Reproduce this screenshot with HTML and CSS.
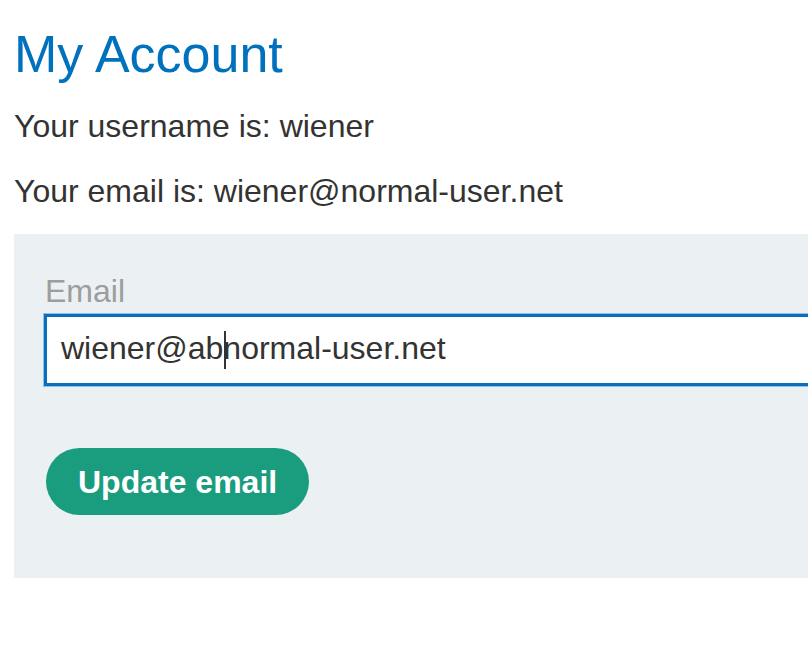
FILE: index.html
```html
<!DOCTYPE html>
<html lang="en">
<head>
<meta charset="utf-8">
<title>My Account</title>
<link rel="stylesheet" href="styles.css">
</head>
<body>
<div class="page">
  <h1 class="title">My Account</h1>
  <p class="info info-first">Your username is: wiener</p>
  <p class="info info-second">Your email is: wiener@normal-user.net</p>
  <form class="panel">
    <label class="label">Email</label>
    <div class="field">wiener@ab<span class="caret"></span>normal-user.net</div>
    <button type="button" class="button">Update email</button>
  </form>
</div>
</body>
</html>
```
FILE: styles.css
```css
html, body {
  margin: 0;
  padding: 0;
  overflow: hidden;
  background: #ffffff;
}
body {
  font-family: "Liberation Sans", Arial, sans-serif;
  color: #333332;
}
.page {
  width: 1100px;
  padding-left: 14px;
  display: flex;
  flex-direction: column;
}
.title {
  margin: 24px 0 0;
  font-size: 52px;
  line-height: 60px;
  font-weight: normal;
  color: #0071bc;
}
.info {
  margin: 0;
  font-size: 32px;
  line-height: 40px;
}
.info-first { margin-top: 22px; }
.info-second { margin-top: 25px; }
.panel {
  margin-top: 23px;
  background: #ebf0f2;
  padding: 37px 0 63px 30px;
  display: flex;
  flex-direction: column;
  align-items: flex-start;
}
.label {
  font-size: 32px;
  line-height: 40px;
  color: #9d9d9d;
  margin-left: 1px;
}
.field {
  margin-top: 3px;
  align-self: stretch;
  background: #ffffff;
  border: 3px solid #0b6fbd;
  box-shadow: 0 0 0 1px #8fc0e6;
  font-size: 32px;
  line-height: 40px;
  padding: 11px 14px 15px;
  color: #333332;
  white-space: nowrap;
}
.caret {
  position: relative;
  display: inline-block;
  width: 0;
  height: 0;
}
.caret::after {
  content: "";
  position: absolute;
  left: 1px;
  top: -28px;
  width: 2px;
  height: 38px;
  background: #333332;
}
.button {
  margin-top: 62px;
  margin-left: 2px;
  height: 67px;
  padding: 0 32px 0 32px;
  border: none;
  border-radius: 34px;
  background: #1a9c7e;
  color: #ffffff;
  font-family: "Liberation Sans", Arial, sans-serif;
  font-weight: bold;
  font-size: 32px;
  line-height: 40px;
}
```
